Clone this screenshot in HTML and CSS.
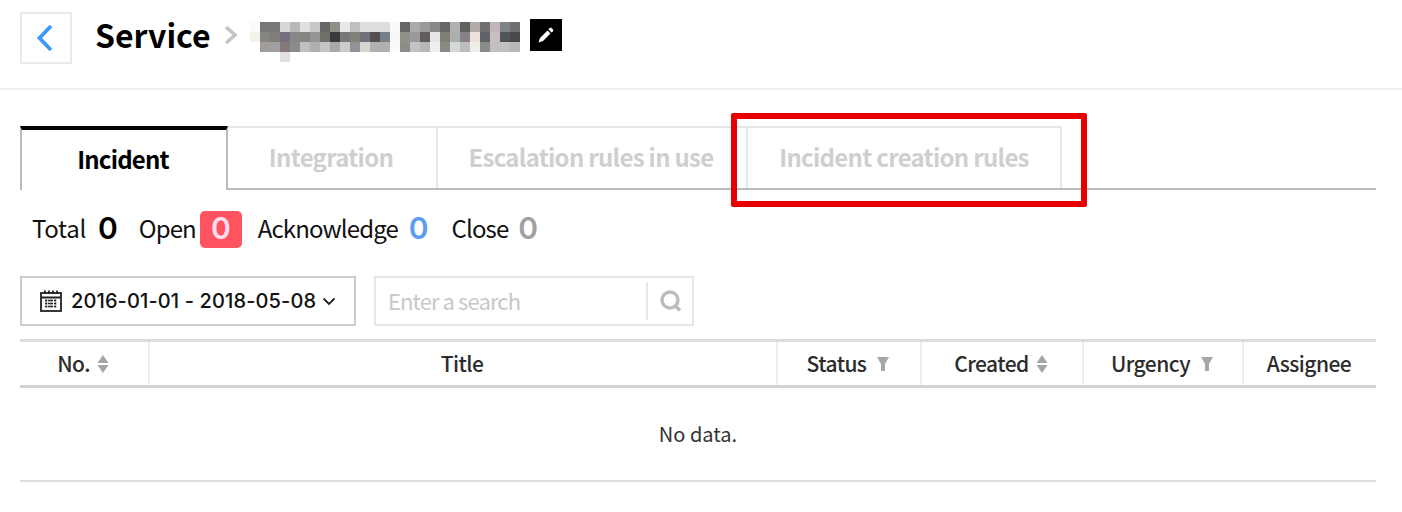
FILE: index.html
```html
<!DOCTYPE html>
<html lang="en">
<head>
<meta charset="utf-8">
<title>Service</title>
<link rel="stylesheet" href="styles.css">
</head>
<body>
<header class="page-head">
  <button class="back" aria-label="Back">
    <svg width="18" height="28" viewBox="0 0 18 28"><path d="M15 2 3.500 14 15 26" fill="none" stroke="#3b99fc" stroke-width="3.800"/></svg>
  </button>
  <h1 class="title">Service</h1>
  <svg class="crumb" width="14" height="20" viewBox="0 0 14 20"><path d="M2 2 11 10 2 18" fill="none" stroke="#c4c4c4" stroke-width="3.600"/></svg>
  <svg class="mosaic" width="270" height="40" viewBox="0 0 27 4" preserveAspectRatio="none" shape-rendering="crispEdges">
    <g>
      <rect x="0" y="0" width="1" height="1" fill="#fafafa"/><rect x="1" y="0" width="1" height="1" fill="#777"/><rect x="2" y="0" width="1" height="1" fill="#777"/><rect x="3" y="0" width="1" height="1" fill="#d8d8d8"/><rect x="4" y="0" width="1" height="1" fill="#b8b8b8"/><rect x="5" y="0" width="1" height="1" fill="#e0e0e0"/><rect x="6" y="0" width="1" height="1" fill="#c8c8c8"/><rect x="7" y="0" width="1" height="1" fill="#666"/><rect x="8" y="0" width="1" height="1" fill="#908c88"/><rect x="9" y="0" width="1" height="1" fill="#e8e8e8"/><rect x="10" y="0" width="1" height="1" fill="#c0c0c0"/><rect x="11" y="0" width="1" height="1" fill="#ddd"/><rect x="12" y="0" width="1" height="1" fill="#ddd"/><rect x="13" y="0" width="1" height="1" fill="#ddd"/><rect x="14" y="0" width="1" height="1" fill="#fafafa"/><rect x="15" y="0" width="1" height="1" fill="#666"/><rect x="16" y="0" width="1" height="1" fill="#aaa"/><rect x="17" y="0" width="1" height="1" fill="#999"/><rect x="18" y="0" width="1" height="1" fill="#888"/><rect x="19" y="0" width="1" height="1" fill="#666"/><rect x="20" y="0" width="1" height="1" fill="#b0b0b0"/><rect x="21" y="0" width="1" height="1" fill="#606060"/><rect x="22" y="0" width="1" height="1" fill="#b0aaa8"/><rect x="23" y="0" width="1" height="1" fill="#707070"/><rect x="24" y="0" width="1" height="1" fill="#c0b8b8"/><rect x="25" y="0" width="1" height="1" fill="#808488"/><rect x="26" y="0" width="1" height="1" fill="#707070"/>
    </g>
    <g>
      <rect x="0" y="1" width="1" height="1" fill="#f5f2ee"/><rect x="1" y="1" width="1" height="1" fill="#858585"/><rect x="2" y="1" width="1" height="1" fill="#807c78"/><rect x="3" y="1" width="1" height="1" fill="#757080"/><rect x="4" y="1" width="1" height="1" fill="#888"/><rect x="5" y="1" width="1" height="1" fill="#858585"/><rect x="6" y="1" width="1" height="1" fill="#959595"/><rect x="7" y="1" width="1" height="1" fill="#707068"/><rect x="8" y="1" width="1" height="1" fill="#3a3a3a"/><rect x="9" y="1" width="1" height="1" fill="#787878"/><rect x="10" y="1" width="1" height="1" fill="#808078"/><rect x="11" y="1" width="1" height="1" fill="#707078"/><rect x="12" y="1" width="1" height="1" fill="#555050"/><rect x="13" y="1" width="1" height="1" fill="#778088"/><rect x="14" y="1" width="1" height="1" fill="#f8f8f8"/><rect x="15" y="1" width="1" height="1" fill="#909088"/><rect x="16" y="1" width="1" height="1" fill="#9a9a9a"/><rect x="17" y="1" width="1" height="1" fill="#605c5c"/><rect x="18" y="1" width="1" height="1" fill="#e5e5e5"/><rect x="19" y="1" width="1" height="1" fill="#807c78"/><rect x="20" y="1" width="1" height="1" fill="#aab0b0"/><rect x="21" y="1" width="1" height="1" fill="#888088"/><rect x="22" y="1" width="1" height="1" fill="#eee0dc"/><rect x="23" y="1" width="1" height="1" fill="#606468"/><rect x="24" y="1" width="1" height="1" fill="#c8c0c0"/><rect x="25" y="1" width="1" height="1" fill="#505458"/><rect x="26" y="1" width="1" height="1" fill="#484848"/>
    </g>
    <g>
      <rect x="1" y="2" width="1" height="1" fill="#a09c98"/><rect x="2" y="2" width="1" height="1" fill="#a0a0a0"/><rect x="3" y="2" width="1" height="1" fill="#857878"/><rect x="4" y="2" width="1" height="1" fill="#8a8a8a"/><rect x="5" y="2" width="1" height="1" fill="#c0c0c0"/><rect x="6" y="2" width="1" height="1" fill="#b0b0b0"/><rect x="7" y="2" width="1" height="1" fill="#c0c4c4"/><rect x="8" y="2" width="1" height="1" fill="#a8a8a4"/><rect x="9" y="2" width="1" height="1" fill="#ccc"/><rect x="10" y="2" width="1" height="1" fill="#909498"/><rect x="11" y="2" width="1" height="1" fill="#d8d4d0"/><rect x="12" y="2" width="1" height="1" fill="#b0b0b0"/><rect x="13" y="2" width="1" height="1" fill="#b0b0b0"/><rect x="14" y="2" width="1" height="1" fill="#fafafa"/><rect x="15" y="2" width="1" height="1" fill="#8c8c88"/><rect x="16" y="2" width="1" height="1" fill="#c0c4c4"/><rect x="17" y="2" width="1" height="1" fill="#b8b8b8"/><rect x="18" y="2" width="1" height="1" fill="#eee"/><rect x="19" y="2" width="1" height="1" fill="#8a8a84"/><rect x="20" y="2" width="1" height="1" fill="#d4d8d8"/><rect x="21" y="2" width="1" height="1" fill="#bcbcbc"/><rect x="22" y="2" width="1" height="1" fill="#f0ece8"/><rect x="23" y="2" width="1" height="1" fill="#888c8c"/><rect x="24" y="2" width="1" height="1" fill="#c0c0c0"/><rect x="25" y="2" width="1" height="1" fill="#c0c0c0"/><rect x="26" y="2" width="1" height="1" fill="#b8b8b8"/>
    </g>
    <rect x="3" y="3" width="1" height="1" fill="#e0e0e0"/>
  </svg>
  <span class="edit">
    <svg width="18" height="18" viewBox="0 0 18 18"><path d="M1.500 16.500 3 12 10.500 4.500 13.500 7.500 6 15Z" fill="#fff"/><path d="M12 2.500 14 1.500 16.500 4 15.500 6 14.500 6.500 11.500 3.500Z" fill="#fff"/></svg>
  </span>
</header>

<main class="content">
  <nav class="tabs">
    <a class="tab active">Incident</a>
    <a class="tab tab-integration">Integration</a>
    <a class="tab tab-escalation">Escalation rules in use</a>
    <a class="tab tab-rules">Incident creation rules</a>
    <span class="highlight"></span>
  </nav>

  <section class="stats">
    <span class="label label-total">Total</span><b class="num num-total">0</b>
    <span class="label label-open">Open</span><b class="badge">0</b>
    <span class="label label-ack">Acknowledge</span><b class="num num-ack">0</b>
    <span class="label label-close">Close</span><b class="num num-close">0</b>
  </section>

  <section class="filters">
    <button class="date">
      <svg width="24" height="24" viewBox="0 0 24 24" fill="none" stroke="#222" stroke-width="1.800">
        <rect x="2" y="4" width="20" height="18"/>
        <path d="M2 8.500H22" stroke-width="2"/>
        <path d="M6 1.500V5M10 1.500V5M14 1.500V5M18 1.500V5"/>
        <path d="M6 11.500H18M6 14.500H18M6 17.500H18M7.500 10.500V19M12 10.500V19M16.500 10.500V19" stroke-width="1.500" stroke-dasharray="2 1"/>
      </svg>
      <span>2016-01-01 - 2018-05-08</span>
      <svg width="14" height="9" viewBox="0 0 14 9"><path d="M1.500 1.500 7 7 12.500 1.500" fill="none" stroke="#222" stroke-width="1.800"/></svg>
    </button>
    <div class="search">
      <span class="placeholder">Enter a search</span>
      <span class="search-btn">
        <svg width="24" height="24" viewBox="0 0 24 24" fill="none" stroke="#bbb" stroke-width="3.400"><circle cx="12" cy="11" r="8"/><path d="M16.500 16 22 21.500"/></svg>
      </span>
    </div>
  </section>

  <section class="table">
    <div class="thead">
      <div class="th"><span>No.</span><svg width="12" height="20" viewBox="0 0 12 20"><path d="M6 1 11.500 9H.5Z" fill="#a6a6a6"/><path d="M6 19 .5 11H11.500Z" fill="#a6a6a6"/></svg></div>
      <div class="th"><span>Title</span></div>
      <div class="th"><span>Status</span><svg class="filter" width="12" height="16" viewBox="0 0 12 16"><path d="M0 1H12L8 8V15H4V8Z" fill="#a6a6a6"/></svg></div>
      <div class="th"><span>Created</span><svg width="12" height="20" viewBox="0 0 12 20"><path d="M6 1 11.500 9H.5Z" fill="#a6a6a6"/><path d="M6 19 .5 11H11.500Z" fill="#a6a6a6"/></svg></div>
      <div class="th"><span>Urgency</span><svg class="filter" width="12" height="16" viewBox="0 0 12 16"><path d="M0 1H12L8 8V15H4V8Z" fill="#a6a6a6"/></svg></div>
      <div class="th"><span>Assignee</span></div>
    </div>
    <div class="empty"><span>No data.</span></div>
  </section>
</main>
</body>
</html>
```
FILE: styles.css
```css
* { box-sizing: border-box; }
html, body { margin: 0; padding: 0; background: #fff; }
body {
  width: 1402px;
  height: 512px;
  overflow: hidden;
  color: #111;
  font-family: "Noto Sans CJK KR", "Noto Sans", sans-serif;
}
button { font: inherit; color: inherit; background: none; padding: 0; }

.page-head {
  display: flex;
  align-items: flex-start;
  height: 90px;
  padding: 12px 0 0 20px;
  border-bottom: 2px solid #eee;
}
.back {
  display: flex;
  align-items: center;
  justify-content: center;
  width: 52px;
  height: 52px;
  margin-right: 23px;
  padding-right: 2px;
  border: 2px solid #eaeaea;
}
.title {
  margin: -2px 0 0;
  font-size: 32px;
  line-height: 48px;
  font-weight: 700;
  color: #000;
}
.crumb { margin: 13px 0 0 13px; }
.mosaic { margin: 10px 0 0 12px; }
.edit {
  display: flex;
  align-items: center;
  justify-content: center;
  width: 32px;
  height: 32px;
  margin: 7px 0 0 10px;
  background: #000;
}

.content { width: 1356px; margin-left: 20px; }

.tabs {
  position: relative;
  display: flex;
  height: 64px;
  margin-top: 36px;
  padding-bottom: 2px;
  border-bottom: 2px solid #bbb;
}
.tab {
  display: flex;
  align-items: center;
  justify-content: center;
  height: 62px;
  padding-bottom: 4px;
  border-top: 2px solid #e6e6e6;
  border-right: 2px solid #e6e6e6;
  font-size: 24px;
  font-weight: 700;
  letter-spacing: -0.72px;
  color: #cfcfcf;
}
.tab.active {
  width: 208px;
  height: 64px;
  padding: 0 2px 4px 0;
  border-top: 4px solid #000;
  border-left: 2px solid #bbb;
  border-right: 2px solid #bbb;
  background: #fff;
  color: #000;
  letter-spacing: -0.8px;
  position: relative;
  z-index: 1;
}
.tab-integration { width: 210px; padding-right: 2px; }
.tab-escalation { width: 310px; padding-right: 2px; }
.tab-rules { width: 314px; }
.highlight {
  position: absolute;
  left: 711px;
  top: -13px;
  width: 356px;
  height: 94px;
  border: 6px solid #e60000;
  border-radius: 2px;
  z-index: 2;
}

.stats {
  display: flex;
  align-items: center;
  height: 38px;
  margin-top: 20px;
  padding-left: 12px;
  font-size: 24px;
  letter-spacing: -0.9px;
}
.label { color: #111; line-height: 34px; padding-bottom: 2px; }
.label-total { letter-spacing: -0.3px; }
.num {
  font-family: Inter, "Noto Sans", sans-serif;
  font-size: 30px;
  font-weight: 600;
  letter-spacing: 0;
  margin-left: 12px;
  line-height: 34px;
  padding-bottom: 3px;
}
.num-total { color: #000; }
.label-open { margin-left: 21px; }
.badge {
  display: flex;
  align-items: center;
  justify-content: center;
  width: 42px;
  height: 37px;
  margin-left: 4px;
  padding-bottom: 2px;
  border-radius: 5px;
  background: #ff5460;
  color: #fde;
  font-family: Inter, "Noto Sans", sans-serif;
  font-size: 30px;
  font-weight: 600;
  letter-spacing: 0;
}
.label-ack { margin-left: 16px; }
.num-ack { color: #5c9cf5; margin-left: 11px; }
.label-close { margin-left: 23px; }
.num-close { color: #a0a0a0; margin-left: 10px; }

.filters {
  display: flex;
  gap: 18px;
  margin-top: 28px;
}
.date {
  display: flex;
  align-items: center;
  width: 336px;
  height: 50px;
  padding-left: 17px;
  border: 2px solid #ccc;
  font-family: Inter, "Noto Sans", sans-serif;
  font-size: 20px;
  font-weight: 500;
  letter-spacing: 0.12px;
  color: #111;
}
.date span { margin: 0 6px 0 8px; }
.search {
  display: flex;
  align-items: center;
  justify-content: space-between;
  width: 320px;
  height: 50px;
  padding-left: 12px;
  border: 2px solid #e6e6e6;
}
.placeholder { font-size: 22px; letter-spacing: -0.9px; color: #c8c8c8; padding-bottom: 2px; }
.search-btn {
  display: flex;
  align-items: center;
  justify-content: center;
  width: 46px;
  height: 38px;
  border-left: 2px solid #e6e6e6;
}

.table { margin-top: 13px; }
.thead {
  display: grid;
  grid-template-columns: 130px 628px 144px 162px 160px 132px;
  height: 49px;
  border-top: 3px solid #ddd;
  border-bottom: 3px solid #d2d2d2;
}
.th {
  display: flex;
  align-items: center;
  justify-content: center;
  gap: 7px;
  padding-right: 2px;
  border-right: 2px solid #eee;
  font-size: 21px;
  font-weight: 500;
  letter-spacing: -0.55px;
  color: #2c2c2c;
}
.th span { padding-bottom: 2px; }
.th .filter { margin-left: 4px; }
.th:last-child { border-right: 0; }
.empty {
  display: flex;
  align-items: center;
  justify-content: center;
  height: 94px;
  padding-bottom: 2px;
  border-bottom: 2px solid #ddd;
  font-size: 20px;
  color: #333;
}
```
